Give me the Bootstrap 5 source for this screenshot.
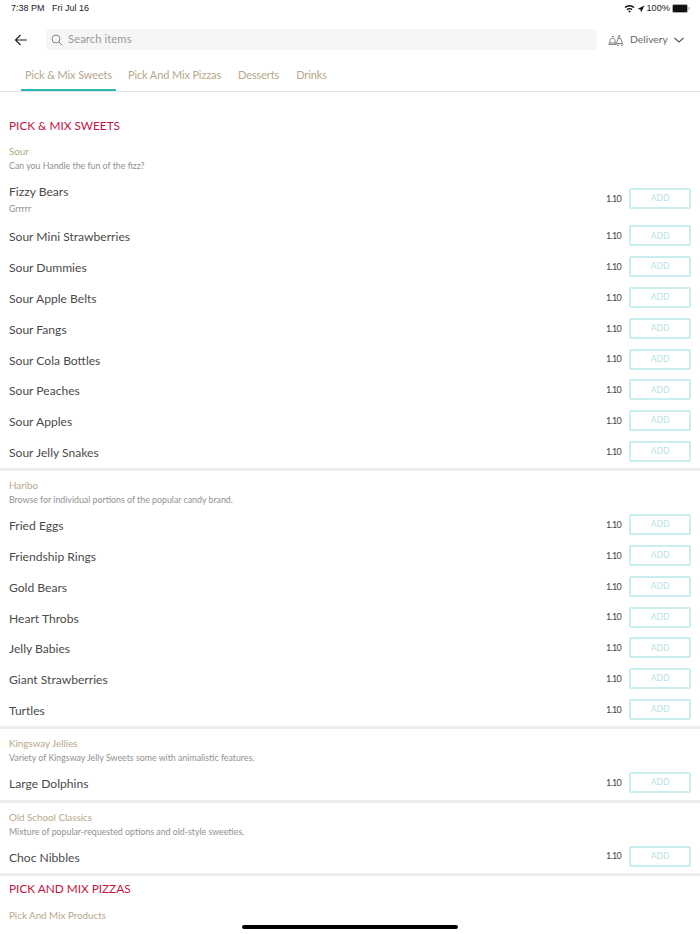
<!DOCTYPE html>
<html lang="en">
<head>
  <meta charset="UTF-8">
  <title>Menu</title>
  <link href="https://cdn.jsdelivr.net/npm/bootstrap@5.3.0/dist/css/bootstrap.min.css" rel="stylesheet">
  <style>
    html, body { height: 934px; overflow: hidden; }
    body { font-family: Lato, "Liberation Sans", sans-serif; background: #fff; color: #444; position: relative; }
    .status-bar { height: 18px; padding: 0 10px 0 11px; font-family: "Liberation Sans", sans-serif; font-size: 9px; color: #222; }
    .status-icons { gap: 2px; }
    .status-icons .pct { font-size: 9.2px; }
    .top-row { height: 21px; margin-top: 11px; padding-right: 12px; }
    .back-btn { width: 46px; }
    .search-box { height: 21px; background: #f6f6f6; border-radius: 3px; padding-left: 5px; font-size: 11.2px; color: #999; letter-spacing: .1px; }
    .search-ico { margin-right: 1px; }
    .mode-box { width: 91px; padding-left: 11px; font-size: 10.3px; color: #666; }
    .mode-box span { padding-top: 1px; }
    .tab-row { height: 42px; padding-left: 21px; border-bottom: 1px solid #e2e2e2; }
    .tab-item { height: 29px; padding: 5px 4px 0; margin-top: 12px; font-size: 11px; color: #b7a78a; letter-spacing: -.13px; margin-right: 9px; }
    .tab-item.on { border-bottom: 2px solid #2bb8b3; margin-right: 8px; }
    .sect-title { color: #c2143f; font-size: 11.8px; padding-left: 9px; line-height: 18px; margin-top: 4px; margin-bottom: 10px; }
    .first-title { margin-top: 25px; margin-bottom: 9px; }
    .group-name { color: #b7a78a; font-size: 9.8px; padding-left: 9px; line-height: 14px; margin-top: 7px; }
    .group-text { color: #919191; font-size: 8.8px; padding-left: 9px; line-height: 14px; margin-top: 1px; margin-bottom: 2px; }
    .item-row { height: 30.8px; padding: 0 9px; }
    .item-row.tall { height: 44px; margin-top: 3.500px; }
    .item-name { font-size: 12.1px; color: #4a4a4a; line-height: 16px; padding-top: 3px; }
    .tall .item-name { padding-top: 1px; }
    .item-sub { font-size: 8.7px; color: #919191; line-height: 12px; margin-top: 3px; }
    .price { font-size: 9px; color: #444; margin-right: 8px; letter-spacing: -.7px; }
    .add-btn { width: 62px; height: 21px; border: 2px solid #c8eeee; border-radius: 2px; color: #b5e4e4; font-size: 8.5px; background: #fff; padding: 0; }
    .group-sep { height: 3px; background: #eeeeee; margin-top: 1.500px; }
    .home-bar { position: absolute; left: 242px; top: 925px; width: 216px; height: 4px; border-radius: 2px; background: #000; }
  </style>
</head>
<body>

<div class="status-bar d-flex justify-content-between align-items-center">
  <div>7:38 PM &nbsp; Fri Jul 16</div>
  <div class="status-icons d-flex align-items-center">
    <svg width="11" height="9" viewBox="0 0 22 18"><path d="M1 6a14.500 14.500 0 0 1 20 0l-2 2.200a11.500 11.500 0 0 0-16 0zM5 10.500a8.500 8.500 0 0 1 12 0l-2 2.200a5.500 5.500 0 0 0-8 0zM8.500 14.500a3.500 3.500 0 0 1 5 0L11 17.500z" fill="#111"/></svg>
    <svg width="8" height="8" viewBox="0 0 16 16"><path d="M15 1L1 8l6 1 1 6z" fill="#111"/></svg>
    <span class="pct">100%</span>
    <svg width="18" height="9" viewBox="0 0 18 9"><rect x=".5" y=".5" width="15" height="8" rx="1.500" fill="#111" stroke="#aaa"/><rect x="16.500" y="3" width="1" height="3" fill="#aaa"/></svg>
  </div>
</div>

<div class="top-row d-flex align-items-center">
  <div class="back-btn d-flex justify-content-center pe-1">
    <svg width="14" height="12" viewBox="0 0 14 12"><path d="M13 6H1.500M6.500 1L1.500 6l5 5" fill="none" stroke="#222" stroke-width="1.200"/></svg>
  </div>
  <div class="search-box flex-grow-1 d-flex align-items-center gap-1">
    <svg class="search-ico" width="12" height="12" viewBox="0 0 12 12"><circle cx="5" cy="5" r="4" fill="none" stroke="#888"/><path d="M8 8l3.500 3.500" stroke="#888"/></svg>
    <span>Search items</span>
  </div>
  <div class="mode-box d-flex align-items-center justify-content-between">
    <svg width="16" height="12" viewBox="0 0 16 12" fill="none" stroke="#666" stroke-width=".8"><path d="M2 9V5.500a3 3 0 0 1 5 0V9M1 9h7v1.500H1zM4 2.500h2M11 1.500a1 1 0 1 1 0 2 1 1 0 0 1 0-2zM10 4.500l-1.500 5h6L13 5l-1-.5zM9 10.500a1 1 0 0 0 2 0M13 10.500a1 1 0 0 0 2 0"/></svg>
    <span>Delivery</span>
    <svg width="10" height="6" viewBox="0 0 10 6" class="me-1"><path d="M.5 1l4.500 4 4.500-4" fill="none" stroke="#555" stroke-width="1.100"/></svg>
  </div>
</div>

<div class="tab-row d-flex">
  <div class="tab-item on">Pick &amp; Mix Sweets</div>
  <div class="tab-item">Pick And Mix Pizzas</div>
  <div class="tab-item">Desserts</div>
  <div class="tab-item">Drinks</div>
</div>

<div class="sect-title first-title">PICK &amp; MIX SWEETS</div>

<div class="group-name">Sour</div>
<div class="group-text">Can you Handle the fun of the fizz?</div>
<div class="item-row tall d-flex align-items-center">
  <div class="flex-grow-1"><div class="item-name">Fizzy Bears</div><div class="item-sub">Grrrrr</div></div>
  <span class="price">1.10</span><button class="add-btn">ADD</button>
</div>
<div class="item-row d-flex align-items-center"><div class="item-name flex-grow-1">Sour Mini Strawberries</div><span class="price">1.10</span><button class="add-btn">ADD</button></div>
<div class="item-row d-flex align-items-center"><div class="item-name flex-grow-1">Sour Dummies</div><span class="price">1.10</span><button class="add-btn">ADD</button></div>
<div class="item-row d-flex align-items-center"><div class="item-name flex-grow-1">Sour Apple Belts</div><span class="price">1.10</span><button class="add-btn">ADD</button></div>
<div class="item-row d-flex align-items-center"><div class="item-name flex-grow-1">Sour Fangs</div><span class="price">1.10</span><button class="add-btn">ADD</button></div>
<div class="item-row d-flex align-items-center"><div class="item-name flex-grow-1">Sour Cola Bottles</div><span class="price">1.10</span><button class="add-btn">ADD</button></div>
<div class="item-row d-flex align-items-center"><div class="item-name flex-grow-1">Sour Peaches</div><span class="price">1.10</span><button class="add-btn">ADD</button></div>
<div class="item-row d-flex align-items-center"><div class="item-name flex-grow-1">Sour Apples</div><span class="price">1.10</span><button class="add-btn">ADD</button></div>
<div class="item-row d-flex align-items-center"><div class="item-name flex-grow-1">Sour Jelly Snakes</div><span class="price">1.10</span><button class="add-btn">ADD</button></div>
<div class="group-sep"></div>

<div class="group-name">Haribo</div>
<div class="group-text">Browse for individual portions of the popular candy brand.</div>
<div class="item-row d-flex align-items-center"><div class="item-name flex-grow-1">Fried Eggs</div><span class="price">1.10</span><button class="add-btn">ADD</button></div>
<div class="item-row d-flex align-items-center"><div class="item-name flex-grow-1">Friendship Rings</div><span class="price">1.10</span><button class="add-btn">ADD</button></div>
<div class="item-row d-flex align-items-center"><div class="item-name flex-grow-1">Gold Bears</div><span class="price">1.10</span><button class="add-btn">ADD</button></div>
<div class="item-row d-flex align-items-center"><div class="item-name flex-grow-1">Heart Throbs</div><span class="price">1.10</span><button class="add-btn">ADD</button></div>
<div class="item-row d-flex align-items-center"><div class="item-name flex-grow-1">Jelly Babies</div><span class="price">1.10</span><button class="add-btn">ADD</button></div>
<div class="item-row d-flex align-items-center"><div class="item-name flex-grow-1">Giant Strawberries</div><span class="price">1.10</span><button class="add-btn">ADD</button></div>
<div class="item-row d-flex align-items-center"><div class="item-name flex-grow-1">Turtles</div><span class="price">1.10</span><button class="add-btn">ADD</button></div>
<div class="group-sep"></div>

<div class="group-name">Kingsway Jellies</div>
<div class="group-text">Variety of Kingsway Jelly Sweets some with animalistic features.</div>
<div class="item-row d-flex align-items-center"><div class="item-name flex-grow-1">Large Dolphins</div><span class="price">1.10</span><button class="add-btn">ADD</button></div>
<div class="group-sep"></div>

<div class="group-name">Old School Classics</div>
<div class="group-text">Mixture of popular-requested options and old-style sweeties.</div>
<div class="item-row d-flex align-items-center"><div class="item-name flex-grow-1">Choc Nibbles</div><span class="price">1.10</span><button class="add-btn">ADD</button></div>
<div class="group-sep"></div>

<div class="sect-title">PICK AND MIX PIZZAS</div>
<div class="group-name">Pick And Mix Products</div>

<div class="home-bar"></div>

</body>
</html>
